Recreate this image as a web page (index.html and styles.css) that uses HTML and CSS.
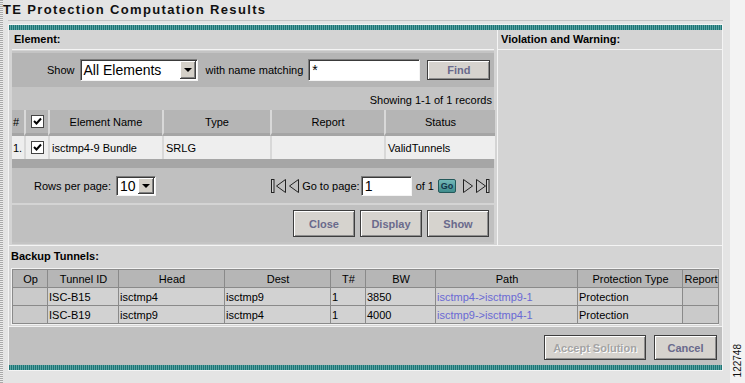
FILE: index.html
```html
<!DOCTYPE html>
<html>
<head>
<meta charset="utf-8">
<title>TE Protection Computation Results</title>
<link rel="stylesheet" href="styles.css">
</head>
<body>
<div class="page">
  <div class="main">
    <div class="title">TE Protection Computation Results</div>
    <div class="rule"></div>
    <div class="panel">
      <div class="teal"></div>
      <div class="top">
        <div class="left">
          <div class="hdr">Element:</div>
          <div class="elbox">
            <div class="filter">
              <span class="lbl">Show</span>
              <div class="select sel-all"><span class="sv">All Elements</span><span class="arrow"><span class="tri"></span></span></div>
              <span class="lbl lbl-with">with name matching</span>
              <div class="input in-name">*</div>
              <button class="btn btn-find">Find</button>
            </div>
            <div class="showing">Showing 1-1 of 1 records</div>
            <table class="et">
              <colgroup><col class="w1"><col class="w2"><col class="w3"><col class="w4"><col class="w5"><col class="w6"></colgroup>
              <tr class="eh">
                <th class="first">#</th>
                <th><span class="cb"><svg width="11" height="11" viewBox="0 0 11 11"><path d="M2 5 L4.5 7.5 L9 2.5" fill="none" stroke="#000" stroke-width="2"/></svg></span></th>
                <th>Element Name</th>
                <th>Type</th>
                <th>Report</th>
                <th>Status</th>
              </tr>
              <tr class="ed">
                <td class="first">1.</td>
                <td class="cbc"><span class="cb"><svg width="11" height="11" viewBox="0 0 11 11"><path d="M2 5 L4.5 7.5 L9 2.5" fill="none" stroke="#000" stroke-width="2"/></svg></span></td>
                <td>isctmp4-9 Bundle</td>
                <td>SRLG</td>
                <td></td>
                <td>ValidTunnels</td>
              </tr>
            </table>
            <div class="darkbar"></div>
            <div class="pager">
              <span class="lbl">Rows per page:</span>
              <div class="select sel-rows"><span class="sv">10</span><span class="arrow"><span class="tri"></span></span></div>
              <div class="pnav">
                <svg class="ico ico-first" width="15" height="14" viewBox="0 0 15 14"><rect x="0.5" y="0.5" width="2.5" height="13" fill="#d0d0d0" stroke="#222"/><path d="M14.5 0.5 L5.5 7 L14.5 13.5 Z" fill="none" stroke="#222"/></svg>
                <svg class="ico ico-prev" width="10" height="14" viewBox="0 0 10 14"><path d="M9.5 0.5 L0.5 7 L9.5 13.5 Z" fill="none" stroke="#222"/></svg>
                <span class="lbl">Go to page:</span>
                <div class="input in-page">1</div>
                <span class="lbl">of 1</span>
                <span class="go">Go</span>
                <svg class="ico ico-next" width="11" height="14" viewBox="0 0 11 14"><path d="M0.5 0.5 L9.5 7 L0.5 13.5 Z" fill="none" stroke="#222"/></svg>
                <svg class="ico ico-last" width="14" height="14" viewBox="0 0 14 14"><path d="M0.5 0.5 L9.5 7 L0.5 13.5 Z" fill="none" stroke="#222"/><rect x="10.5" y="0.5" width="2.5" height="13" fill="#d0d0d0" stroke="#222"/></svg>
              </div>
            </div>
            <div class="btnrow">
              <button class="btn btn-big">Close</button>
              <button class="btn btn-big">Display</button>
              <button class="btn btn-big">Show</button>
            </div>
          </div>
        </div>
        <div class="right">
          <div class="hdr hdr-r">Violation and Warning:</div>
        </div>
      </div>
      <div class="bthdr">Backup Tunnels:</div>
      <div class="btwrap">
        <table class="bt">
          <colgroup><col class="b1"><col class="b2"><col class="b3"><col class="b4"><col class="b5"><col class="b6"><col class="b7"><col class="b8"><col class="b9"></colgroup>
          <tr class="bh">
            <th>Op</th><th>Tunnel ID</th><th>Head</th><th>Dest</th><th>T#</th><th>BW</th><th>Path</th><th>Protection Type</th><th>Report</th>
          </tr>
          <tr>
            <td class="op"></td><td>ISC-B15</td><td>isctmp4</td><td>isctmp9</td><td>1</td><td>3850</td><td><a class="lnk">isctmp4-&gt;isctmp9-1</a></td><td>Protection</td><td class="op"></td>
          </tr>
          <tr>
            <td class="op"></td><td>ISC-B19</td><td>isctmp9</td><td>isctmp4</td><td>1</td><td>4000</td><td><a class="lnk">isctmp9-&gt;isctmp4-1</a></td><td>Protection</td><td class="op"></td>
          </tr>
        </table>
      </div>
      <div class="footer">
        <button class="btn btn-foot btn-dis">Accept Solution</button>
        <button class="btn btn-foot btn-cancel">Cancel</button>
      </div>
      <div class="teal"></div>
    </div>
  </div>
  <div class="strip"><span class="code">122748</span></div>
</div>
</body>
</html>
```
FILE: styles.css
```css
* { box-sizing: border-box; }
html, body { margin: 0; padding: 0; }
body {
  width: 745px; height: 383px; overflow: hidden;
  background: #e4e4e4;
  font-family: "Liberation Sans", Arial, sans-serif;
  font-size: 11px; color: #000;
}
.page { display: flex; height: 383px; }
.main {
  width: 730px; height: 383px; padding-left: 3px;
  background-image: repeating-linear-gradient(to bottom, #a9a9a9 0 1px, #ececec 1px 2px);
  background-size: 3px 100%; background-repeat: no-repeat;
}
.strip {
  width: 15px; height: 383px; background: #f3f3f3;
  display: flex; flex-direction: column; justify-content: flex-end; align-items: center;
  padding-bottom: 6px;
}
.code {
  writing-mode: vertical-rl; transform: rotate(180deg);
  font-size: 10px; line-height: 10px; color: #111;
}
.title {
  height: 20px; padding-top: 3px;
  font-weight: bold; font-size: 13px; line-height: 14px; letter-spacing: 1.35px;
  color: #111;
}
.rule { margin-left: 5px; width: 715px; height: 1px; background: #c4c4c4; }
.panel {
  margin-top: 3px; margin-left: 5px; width: 715px;
  border: 1px solid #f4f4f4; background: #d4d4d4;
}
.teal {
  height: 5px;
  background: repeating-linear-gradient(to right, #1d7474 0 1px, #5aa3a3 1px 2px);
}
.top { display: flex; height: 216px; border-bottom: 1px solid #f4f4f4; }
.left { width: 489px; padding: 0 3px; border-right: 1px solid #f4f4f4; }
.right { flex: 1; }
.hdr {
  height: 20px; line-height: 18px; padding-left: 2px;
  font-weight: bold; border-bottom: 1px solid #f4f4f4;
}
.hdr-r { padding-left: 3px; }
.elbox {
  margin-top: 1px; height: 193px; padding-top: 2px;
  background: #c4c4c4;
}
.filter {
  height: 34px; background: #b5b5b5;
  display: flex; align-items: center; padding-left: 35px;
}
.lbl { white-space: nowrap; }
.select {
  display: flex; height: 22px; background: #fff;
  border-top: 1px solid #7c7c7c; border-left: 1px solid #7c7c7c;
  border-bottom: 1px solid #f4f4f4; border-right: 1px solid #f4f4f4;
  box-shadow: inset 1px 1px 0 #3a3a3a;
  padding: 1px;
}
.sel-all { width: 118px; margin-left: 5px; }
.sel-rows { width: 40px; height: 20px; margin-left: 5px; }
.sv { flex: 1; font-size: 14px; line-height: 18px; padding-left: 2px; }
.sel-rows .sv { line-height: 16px; padding-left: 2px; }
.arrow {
  width: 16px; background: #d4d0c8;
  box-shadow: inset -1px -1px 0 #404040, inset 1px 1px 0 #fff, inset -2px -2px 0 #808080;
  display: flex; align-items: center; justify-content: center;
}
.tri {
  width: 0; height: 0;
  border-left: 4px solid transparent; border-right: 4px solid transparent;
  border-top: 4px solid #000;
}
.lbl-with { margin-left: 8px; }
.input {
  height: 22px; background: #fff;
  border-top: 1px solid #7c7c7c; border-left: 1px solid #7c7c7c;
  border-bottom: 1px solid #f4f4f4; border-right: 1px solid #f4f4f4;
  box-shadow: inset 1px 1px 0 #3a3a3a;
  font-size: 14px; line-height: 20px; padding-left: 3px;
}
.in-name { width: 112px; margin-left: 5px; }
.in-page { width: 51px; height: 20px; line-height: 18px; margin-left: 1px; margin-right: 4px; }
.btn {
  font-family: "Liberation Sans", Arial, sans-serif;
  font-weight: bold; font-size: 11px; color: #6a6a8c;
  background: #d6d3ce; border: 1px solid #3e3e3e;
  box-shadow: inset 1px 1px 0 #fff, inset -1px -1px 0 #8e8e8e;
  padding: 0; margin: 0;
}
.btn-find { width: 63px; height: 20px; margin-left: 7px; }
.showing {
  height: 23px; line-height: 23px; text-align: right; padding-right: 2px; padding-top: 2px;
}
.et { width: 483px; border-collapse: separate; border-spacing: 0; table-layout: fixed; }
.w1 { width: 12px; } .w2 { width: 24px; } .w3 { width: 114px; }
.w4 { width: 108px; } .w5 { width: 114px; } .w6 { width: 111px; }
.et th {
  height: 26px; padding: 0; font-weight: normal; text-align: center;
  background: #b5b5b5; border-left: 2px solid #d8d8d8; border-bottom: 3px solid #a5a5a5;
}
.et td {
  height: 23px; padding: 0 0 0 2px; background: #eeeeee; border-left: 2px solid #d8d8d8;
  white-space: nowrap;
}
.et .first { border-left: 0; text-align: left; padding-left: 1px; }
.et .cbc { text-align: center; padding: 0; }
.cb {
  display: inline-block; width: 13px; height: 13px; background: #fff;
  border: 1px solid #444; vertical-align: middle; line-height: 0;
}
.darkbar { height: 9px; background: #a6a6a6; }
.pager {
  height: 37px; display: flex; align-items: center; padding: 0 4px 0 22px;
  background: #c0c0c0; border-bottom: 2px solid #d4d4d4;
}
.pnav { margin-left: auto; display: flex; align-items: center; }
.ico { display: block; }
.ico-first { margin-right: 3px; }
.ico-prev { margin-right: 3px; }
.ico-next { margin-left: 7px; margin-right: 2px; }
.go {
  display: inline-block; width: 18px; height: 14px; margin-left: 4px;
  background: linear-gradient(#73b8b8, #3f8c8c); border: 1px solid #23585a; border-radius: 2px;
  font-size: 9px; font-weight: bold; color: #13344a; text-align: center; line-height: 12px;
}
.btnrow {
  height: 37px; display: flex; align-items: center; justify-content: flex-end;
  gap: 5px; padding-right: 5px; background: #c0c0c0;
}
.btn-big { width: 62px; height: 27px; }
.bthdr { height: 21px; line-height: 20px; padding-left: 2px; font-weight: bold; }
.btwrap { margin: 1px 0 0 2px; width: 708px; border: 1px solid #f2f2f2; }
.bt { width: 706px; border-collapse: collapse; table-layout: fixed; }
.b1 { width: 35px; } .b2 { width: 71px; } .b3 { width: 106px; } .b4 { width: 106px; }
.b5 { width: 35px; } .b6 { width: 70px; } .b7 { width: 142px; } .b8 { width: 105px; } .b9 { width: 36px; }
.bt th, .bt td { height: 18px; border: 1px solid #8a8a8a; padding: 0 0 0 1px; white-space: nowrap; }
.bt th { background: #b6b6b6; font-weight: normal; text-align: center; }
.bt td { background: #d2d2d2; }
.bt td.op { background: #cacaca; }
.lnk { color: #6a6ad4; text-decoration: none; }
.footer {
  margin-top: 1px; height: 39px; background: #c0c0c0; border-top: 1px solid #f2f2f2;
  display: flex; justify-content: flex-end; align-items: flex-start;
  padding: 8px 5px 0 0; gap: 8px;
}
.btn-foot { height: 25px; }
.btn-dis { width: 102px; color: #a4a4a4; text-shadow: 1px 1px 0 #fff; }
.btn-cancel { width: 63px; }
```
